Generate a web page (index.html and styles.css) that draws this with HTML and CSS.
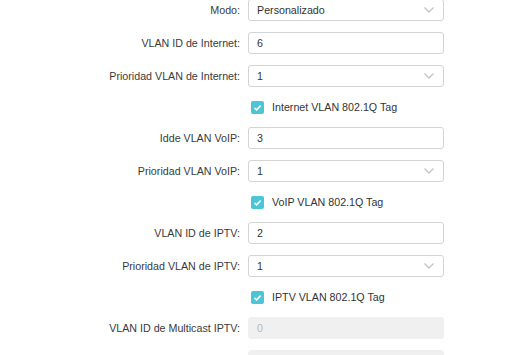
FILE: index.html
```html
<!DOCTYPE html>
<html lang="es">
<head>
<meta charset="utf-8">
<link rel="stylesheet" href="styles.css">
</head>
<body>
<div class="form">
  <div class="row first">
    <label class="lbl">Modo:</label>
    <div class="field select"><span class="val">Personalizado</span><svg class="chev" viewBox="0 0 10 6" width="10" height="6"><path d="M0.5 0.5 L5 5 L9.5 0.5" fill="none" stroke="#c4c4c4" stroke-width="1.3"/></svg></div>
  </div>
  <div class="row">
    <label class="lbl">VLAN ID de Internet:</label>
    <div class="field"><span class="val">6</span></div>
  </div>
  <div class="row">
    <label class="lbl">Prioridad VLAN de Internet:</label>
    <div class="field select"><span class="val">1</span><svg class="chev" viewBox="0 0 10 6" width="10" height="6"><path d="M0.5 0.5 L5 5 L9.5 0.5" fill="none" stroke="#c4c4c4" stroke-width="1.3"/></svg></div>
  </div>
  <div class="row cbrow">
    <span class="lbl"></span>
    <div class="cbwrap"><span class="cb"><svg viewBox="0 0 13 13" width="13" height="13"><path d="M3.5 6.8 L5.6 8.8 L9.6 4.6" fill="none" stroke="#fff" stroke-width="1.6"/></svg></span><span class="cbtext">Internet VLAN 802.1Q Tag</span></div>
  </div>
  <div class="row">
    <label class="lbl">Idde VLAN VoIP:</label>
    <div class="field"><span class="val">3</span></div>
  </div>
  <div class="row">
    <label class="lbl">Prioridad VLAN VoIP:</label>
    <div class="field select"><span class="val">1</span><svg class="chev" viewBox="0 0 10 6" width="10" height="6"><path d="M0.5 0.5 L5 5 L9.5 0.5" fill="none" stroke="#c4c4c4" stroke-width="1.3"/></svg></div>
  </div>
  <div class="row cbrow">
    <span class="lbl"></span>
    <div class="cbwrap"><span class="cb"><svg viewBox="0 0 13 13" width="13" height="13"><path d="M3.5 6.8 L5.6 8.8 L9.6 4.6" fill="none" stroke="#fff" stroke-width="1.6"/></svg></span><span class="cbtext">VoIP VLAN 802.1Q Tag</span></div>
  </div>
  <div class="row">
    <label class="lbl">VLAN ID de IPTV:</label>
    <div class="field"><span class="val">2</span></div>
  </div>
  <div class="row">
    <label class="lbl">Prioridad VLAN de IPTV:</label>
    <div class="field select"><span class="val">1</span><svg class="chev" viewBox="0 0 10 6" width="10" height="6"><path d="M0.5 0.5 L5 5 L9.5 0.5" fill="none" stroke="#c4c4c4" stroke-width="1.3"/></svg></div>
  </div>
  <div class="row cbrow">
    <span class="lbl"></span>
    <div class="cbwrap"><span class="cb"><svg viewBox="0 0 13 13" width="13" height="13"><path d="M3.5 6.8 L5.6 8.8 L9.6 4.6" fill="none" stroke="#fff" stroke-width="1.6"/></svg></span><span class="cbtext">IPTV VLAN 802.1Q Tag</span></div>
  </div>
  <div class="row">
    <label class="lbl">VLAN ID de Multicast IPTV:</label>
    <div class="field disabled"><span class="val">0</span></div>
  </div>
  <div class="row">
    <label class="lbl"></label>
    <div class="field disabled"><span class="val"></span></div>
  </div>
</div>
</body>
</html>
```
FILE: styles.css
```css
html, body {
  margin: 0;
  padding: 0;
  background: #ffffff;
  overflow: hidden;
}
body {
  font-family: "Liberation Sans", Arial, sans-serif;
  font-size: 10.7px;
  color: #333333;
}
.form {
  display: flex;
  flex-direction: column;
  gap: 11px;
  margin-top: -1px;
}
.row {
  display: grid;
  grid-template-columns: 240px 196px;
  column-gap: 8px;
  align-items: center;
}
.lbl {
  text-align: right;
  color: #3a3a3a;
  white-space: nowrap;
}
.field {
  box-sizing: border-box;
  height: 22px;
  border: 1px solid #d4d4d4;
  border-radius: 3px;
  display: flex;
  align-items: center;
  justify-content: space-between;
  padding: 0 9px 0 8px;
  background: #fff;
}
.val {
  color: #333333;
}
.chev {
  display: block;
}
.disabled {
  background: #f0f0f0;
  border-color: #f0f0f0;
}
.disabled .val {
  color: #b8b8b8;
}
.cbrow {
  height: 18px;
}
.cbwrap {
  display: flex;
  align-items: center;
  gap: 8px;
  padding-left: 3px;
}
.cb {
  width: 13px;
  height: 13px;
  border-radius: 2px;
  background: #4ac6d6;
  display: block;
}
.cb svg {
  display: block;
}
.cbtext {
  color: #333333;
}
```
